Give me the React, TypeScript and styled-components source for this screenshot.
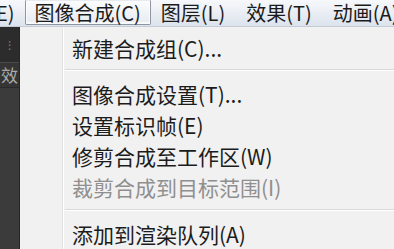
import React from 'react';
import styled, { createGlobalStyle } from 'styled-components';

const GlobalStyle = createGlobalStyle`
  html, body {
    margin: 0;
    padding: 0;
    background: #f1f1f1;
    overflow: hidden;
  }
  body {
    font-family: "Noto Sans CJK SC", "Noto Sans", sans-serif;
  }
`;

const Screen = styled.div`
  width: 394px;
  height: 249px;
  display: flex;
  flex-direction: column;
  overflow: hidden;
`;

const MenuBar = styled.div`
  height: 27px;
  flex: none;
  display: flex;
  align-items: stretch;
  background: linear-gradient(#f6f8fb, #e9edf3 55%, #dce3ec);
  border-bottom: 1px solid #c3ccd8;
  box-sizing: border-box;
  white-space: nowrap;
`;

const BarItem = styled.div<{ $active?: boolean; $shift?: number; $pad?: number }>`
  display: flex;
  align-items: center;
  padding: 0 9px 0 ${(p) => p.$pad ?? 9}px;
  margin-left: ${(p) => p.$shift ?? 0}px;
  margin-bottom: 1px;
  font-size: 20px;
  line-height: 24px;
  color: #1b1b1b;
  box-sizing: border-box;
  border: 1px solid ${(p) => (p.$active ? '#8e959e' : 'transparent')};
  border-top-color: transparent;
  border-radius: 0 0 2px 2px;
  background: ${(p) => (p.$active ? 'linear-gradient(#fbfcfd, #e6eaef)' : 'transparent')};
  box-shadow: ${(p) => (p.$active ? 'inset 0 -1px 0 1px rgba(255,255,255,0.7)' : 'none')};
`;

const Body = styled.div`
  flex: 1;
  display: flex;
  min-height: 0;
`;

const SidePanel = styled.div`
  width: 19px;
  flex: none;
  display: flex;
  flex-direction: column;
  background: #3b3b3b;
  border-right: 1px solid #262626;
`;

const PanelHead = styled.div`
  height: 35px;
  background: #2c2c2c;
  display: flex;
  align-items: center;
  justify-content: center;
  color: #7a7a7a;
  font-size: 12px;
`;

const PanelTab = styled.div`
  height: 24px;
  background: #353535;
  border-top: 1px solid #4a4a4a;
  border-bottom: 1px solid #2a2a2a;
  color: #a9a9a9;
  font-size: 17px;
  line-height: 24px;
  overflow: hidden;
  text-indent: 1px;
`;

const Menu = styled.div`
  flex: 1;
  position: relative;
  background: #f1f1f1;
  padding-top: 5px;
  display: flex;
  flex-direction: column;
`;

const Gutter = styled.div`
  position: absolute;
  top: 0;
  bottom: 0;
  left: 42px;
  width: 1px;
  background: #e1e1e1;
  border-right: 1px solid #ffffff;
`;

const Item = styled.div<{ $disabled?: boolean }>`
  height: 32px;
  display: flex;
  align-items: center;
  padding-left: 52px;
  padding-top: 1px;
  box-sizing: border-box;
  font-size: 21px;
  white-space: nowrap;
  color: ${(p) => (p.$disabled ? '#8f8f8f' : '#1c1c1c')};
`;

const Separator = styled.div`
  height: 16px;
  margin-left: 45px;
  display: flex;
  flex-direction: column;
  justify-content: center;

  &::before {
    content: '';
    display: block;
    height: 1px;
    background: #d9d9d9;
    margin-top: -1px;
  }
  &::after {
    content: '';
    display: block;
    height: 1px;
    background: #ffffff;
  }
`;

const items: Array<{ label: string; disabled?: boolean } | 'sep'> = [
  { label: '新建合成组(C)...' },
  'sep',
  { label: '图像合成设置(T)...' },
  { label: '设置标识帧(E)' },
  { label: '修剪合成至工作区(W)' },
  { label: '裁剪合成到目标范围(I)', disabled: true },
  'sep',
  { label: '添加到渲染队列(A)' },
];

export default function App() {
  return (
    <Screen>
      <GlobalStyle />
      <MenuBar>
        <BarItem $shift={-14}>E)</BarItem>
        <BarItem $active>图像合成(C)</BarItem>
        <BarItem>图层(L)</BarItem>
        <BarItem $pad={10}>效果(T)</BarItem>
        <BarItem $pad={10}>动画(A)</BarItem>
      </MenuBar>
      <Body>
        <SidePanel>
          <PanelHead>⁝</PanelHead>
          <PanelTab>效</PanelTab>
        </SidePanel>
        <Menu>
          <Gutter />
          {items.map((it, i) =>
            it === 'sep' ? (
              <Separator key={i} />
            ) : (
              <Item key={i} $disabled={it.disabled}>
                {it.label}
              </Item>
            )
          )}
        </Menu>
      </Body>
    </Screen>
  );
}
